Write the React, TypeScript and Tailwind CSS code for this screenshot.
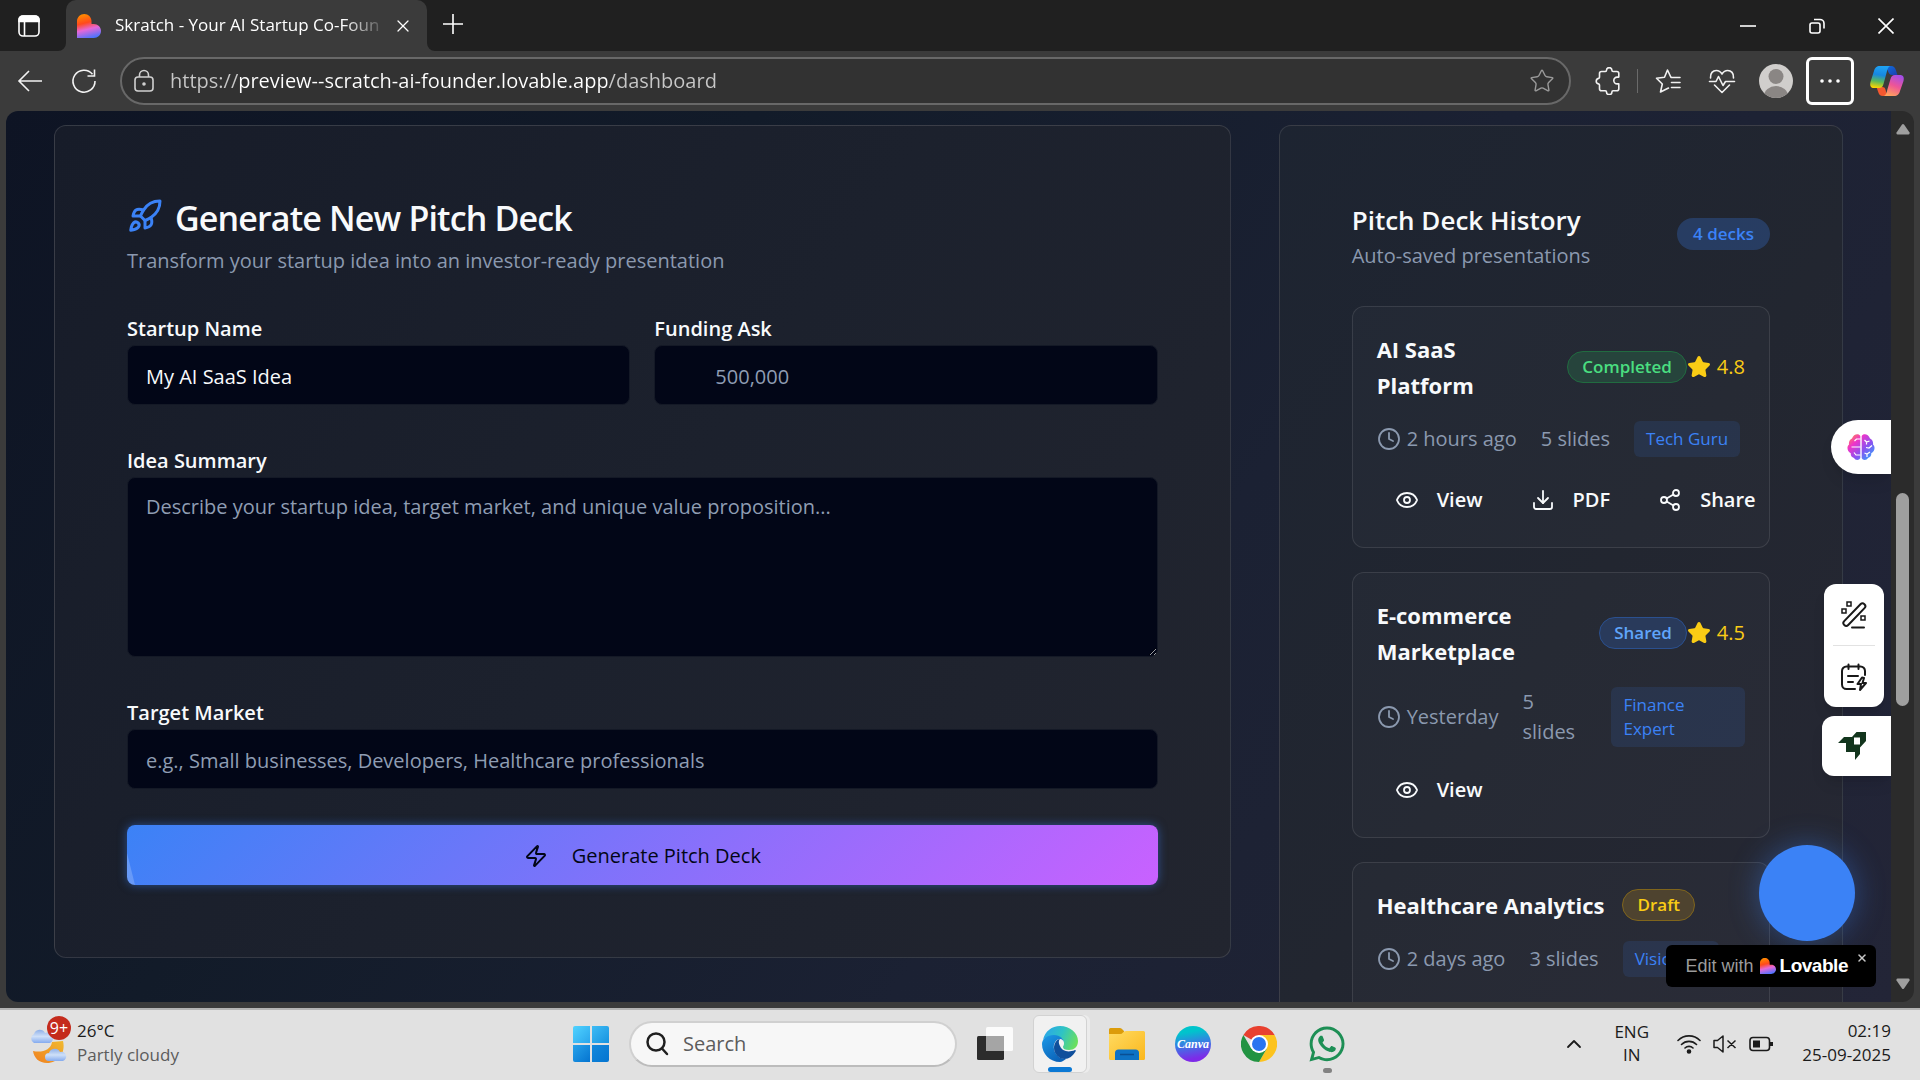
import React from 'react'
import { ChevronUp, Clock, Download, Eye, Rocket, Share2, Star, X, Zap } from 'lucide-react';
import { FaWhatsapp } from 'react-icons/fa';

type Deck = {
	title: string
	status: string
	badge: string
	rating?: string
	time: string
	slides: string
	mentor: string
	full?: boolean
}

const decks: Deck[] = [
	{ title: 'AI SaaS Platform', status: 'Completed', badge: 'bg-[#26443c] border-[#216b40] text-[#4ade80]', rating: '4.8', time: '2 hours ago', slides: '5 slides', mentor: 'Tech Guru', full: true },
	{ title: 'E-commerce Marketplace', status: 'Shared', badge: 'bg-[#293a5b] border-[#2b508f] text-[#60a5fa]', rating: '4.5', time: 'Yesterday', slides: '5 slides', mentor: 'Finance Expert' },
	{ title: 'Healthcare Analytics', status: 'Draft', badge: 'bg-[#4e432f] border-[#80651c] text-[#facc15]', time: '2 days ago', slides: '3 slides', mentor: 'Visionary' },
];

function LovableLogo({ className, id }: { className: string, id: string }) {
	return (
		<svg className={className} viewBox="0 0 24 24" preserveAspectRatio="none">
			<defs>
				<linearGradient id={id} x1="0.35" y1="0" x2="0.6" y2="1">
					<stop offset="0" stopColor="#ff8a00" />
					<stop offset="0.35" stopColor="#ff4a1c" />
					<stop offset="0.62" stopColor="#e667d8" />
					<stop offset="1" stopColor="#4b73ff" />
				</linearGradient>
			</defs>
			<path d="M7.3 0C11.3 0 14.5 3.2 14.5 7.2V10H16.8C20.8 10 24 13.1 24 17S20.8 24 16.8 24H0V7.2C0 3.2 3.3 0 7.3 0Z" fill={`url(#${id})`} />
		</svg>
	)
}

function TabStrip() {
	return (
		<div className="flex h-[51px] shrink-0 bg-[#202020] text-white">
			<button aria-label="Tab actions" className="flex w-[58px] items-center justify-center">
				<svg className="h-6 w-6" viewBox="0 0 24 24" fill="none" stroke="currentColor" strokeWidth="1.6">
					<rect x="2" y="2" width="20" height="20" rx="4" />
					<path d="M7.5 8V22" />
					<path d="M2 7.5V6a4 4 0 0 1 4-4h12a4 4 0 0 1 4 4v1.5Z" fill="currentColor" />
				</svg>
			</button>
			<svg className="h-2 w-2 self-end" viewBox="0 0 8 8"><path d="M8 0V8H0A8 8 0 0 0 8 0Z" fill="#3b3b3b" /></svg>
			<div className="flex w-[361px] items-center rounded-t-[10px] bg-[#3b3b3b] pl-[11px]">
				<LovableLogo id="tab-logo" className="h-6 w-6 shrink-0" />
				<span className="ml-3.5 w-[272px] overflow-hidden pb-0.5 text-[17px] whitespace-nowrap [mask-image:linear-gradient(90deg,#000_84%,transparent)]">Skratch - Your AI Startup Co-Foun</span>
				<button aria-label="Close tab" className="ml-1.5"><X className="h-5 w-5" strokeWidth={1.5} /></button>
			</div>
			<svg className="h-2 w-2 self-end" viewBox="0 0 8 8"><path d="M0 0V8H8A8 8 0 0 1 0 0Z" fill="#3b3b3b" /></svg>
			<button aria-label="New tab" className="flex w-9 items-center justify-center pb-1">
				<svg className="h-6 w-6" viewBox="0 0 24 24" stroke="currentColor" strokeWidth="1.6"><path d="M12 2V22M2 12H22" /></svg>
			</button>
			<div className="ml-auto flex">
				<button aria-label="Minimize" className="flex w-[69px] items-center justify-center">
					<svg className="h-4 w-4" viewBox="0 0 16 16" stroke="currentColor" strokeWidth="1.6"><path d="M0 8H16" /></svg>
				</button>
				<button aria-label="Restore" className="flex w-[69px] items-center justify-center">
					<svg className="h-4 w-4" viewBox="0 0 16 16" fill="none" stroke="currentColor" strokeWidth="1.6"><rect x="1" y="5" width="10" height="10" rx="2" /><path d="M5 1.5h6a4 4 0 0 1 4 4v5" /></svg>
				</button>
				<button aria-label="Close" className="flex w-[69px] items-center justify-center">
					<svg className="h-4 w-4" viewBox="0 0 16 16" stroke="currentColor" strokeWidth="1.6"><path d="M0.5 0.5 15.5 15.5M15.5 0.5 0.5 15.5" /></svg>
				</button>
			</div>
		</div>
	)
}

function Copilot() {
	return (
		<svg className="h-9 w-9" viewBox="0 0 36 36">
			<defs>
				<linearGradient id="cp-a" x1="0.5" y1="0" x2="0.35" y2="1">
					<stop offset="0" stopColor="#1fa3f4" />
					<stop offset="0.4" stopColor="#1787e0" />
					<stop offset="0.7" stopColor="#5bb85c" />
					<stop offset="1" stopColor="#ffd500" />
				</linearGradient>
				<linearGradient id="cp-b" x1="0.7" y1="0" x2="0.3" y2="1">
					<stop offset="0" stopColor="#a44ee8" />
					<stop offset="0.5" stopColor="#ee5597" />
					<stop offset="1" stopColor="#ffa35c" />
				</linearGradient>
				<linearGradient id="cp-c" x1="0" y1="0" x2="1" y2="1">
					<stop offset="0" stopColor="#0f6fe0" />
					<stop offset="1" stopColor="#1b3fae" />
				</linearGradient>
			</defs>
			<path d="M16 3h6c3 0 4 1.500 5 4.500l1.500 4.500h-5c-3 0-4-2-5-5Z" fill="url(#cp-c)" />
			<path d="M20 33h-6c-3 0-4-1.500-5-4.500L7.500 24h6c3 0 3 3 4 6Z" fill="#f4582f" />
			<path d="M11 3h10c-2 1-2.500 3-3.500 7l-3 11c-1 3-2 4-4.500 4H5c-3 0-4.500-2-3.500-6L5 8c1-3.500 2.500-5 6-5Z" fill="url(#cp-a)" />
			<path d="M25 33H15c2-1 2.500-3 3.500-7l3-10c1-3 2-4 4.500-4h5c3 0 4.500 2 3.500 6L31 28c-1 3.500-2.500 5-6 5Z" fill="url(#cp-b)" />
		</svg>
	)
}

function Toolbar() {
	return (
		<div className="flex h-[60px] shrink-0 items-center bg-[#3b3b3b] pr-[15px] text-[#f2f2f2]">
			<button aria-label="Back" className="ml-4 flex w-7 justify-center">
				<svg className="h-6 w-7" viewBox="0 0 28 24" fill="none" stroke="currentColor" strokeWidth="1.6"><path d="M26 12H3M13 2 3 12l10 10" /></svg>
			</button>
			<button aria-label="Refresh" className="ml-[26px] flex w-7 justify-center">
				<svg className="h-7 w-7" viewBox="0 0 28 28" fill="none" stroke="currentColor" strokeWidth="1.6"><path d="M25 14A11 11 0 1 1 22.500 7.200M24.500 2.500V9h-7" /></svg>
			</button>
			<div className="ml-[22px] flex h-12 flex-1 items-center rounded-full border-2 border-[#686868] bg-[#323232] pr-3.5 pl-3">
				<svg className="h-6 w-5 text-[#d0d0d0]" viewBox="0 0 20 24" fill="none" stroke="currentColor" strokeWidth="1.6">
					<rect x="1" y="8" width="18" height="14" rx="3" />
					<path d="M5.500 8V6a4.500 4.500 0 0 1 9 0v2" />
					<circle cx="10" cy="15" r="1" fill="currentColor" />
				</svg>
				<input aria-label="Address" defaultValue="https://preview--scratch-ai-founder.lovable.app/dashboard" className="ml-4 flex-1 bg-[linear-gradient(90deg,#c8c8c8_68px,#fff_68px,#fff_437px,#c8c8c8_437px)] bg-clip-text text-[20px] text-transparent outline-none" />
				<button aria-label="Add to favorites"><Star className="h-[26px] w-[26px] text-[#9a9a9a]" strokeWidth={1.3} /></button>
			</div>
			<button aria-label="Extensions" className="ml-6">
				<svg className="h-7 w-7" viewBox="0 0 28 28" fill="none" stroke="currentColor" strokeWidth="1.6" strokeLinejoin="round">
					<path d="M6.500 4.500h3.800a1.200 1.200 0 0 0 1.200-1.200 2.700 2.700 0 0 1 5.400 0 1.200 1.200 0 0 0 1.200 1.200h3.700a2 2 0 0 1 2 2v3.600h-1.600a3.400 3.400 0 0 0 0 6.800h1.600v4.800a2 2 0 0 1-2 2h-3.700a1.200 1.200 0 0 0-1.200 1.200 2.700 2.700 0 0 1-5.400 0 1.200 1.200 0 0 0-1.200-1.200H6.500a2 2 0 0 1-2-2v-3.600a1.200 1.200 0 0 0-1-1.200 2.800 2.800 0 0 1 0-5.500 1.200 1.200 0 0 0 1-1.200V6.500a2 2 0 0 1 2-2Z" />
				</svg>
			</button>
			<div className="ml-3.5 h-6 w-px bg-[#6a6a6a]" />
			<button aria-label="Favorites" className="ml-4">
				<svg className="h-7 w-7" viewBox="0 0 28 28" fill="none" stroke="currentColor" strokeWidth="1.6" strokeLinejoin="round" strokeLinecap="round">
					<path d="M17 10.500 13.500 3 10.500 10.300 2.500 11.200l5.800 5.800L6.500 25l8-4M17.500 10.500H26M17.500 15.500H26M17.500 20.500H26" />
				</svg>
			</button>
			<button aria-label="Browser essentials" className="ml-[26px]">
				<svg className="h-7 w-7" viewBox="0 0 28 28" fill="none" stroke="currentColor" strokeWidth="1.6" strokeLinejoin="round" strokeLinecap="round">
					<path d="M2.500 11C2 6 5 3.500 8.300 3.500c2.500 0 4.500 1.500 5.700 3.500 1.200-2 3.200-3.500 5.700-3.500C23 3.500 26 6 25.500 11M6.500 18 14 25.500 21.500 18M1.500 14.500H8l2.500-5 4.500 9 2.500-4h9" />
				</svg>
			</button>
			<button aria-label="Profile" className="ml-[23px]">
				<svg className="h-[34px] w-[34px]" viewBox="0 0 34 34">
					<clipPath id="avatar"><circle cx="17" cy="17" r="17" /></clipPath>
					<g clipPath="url(#avatar)">
						<rect width="34" height="34" fill="#d0cecc" />
						<circle cx="17" cy="12.500" r="7.500" fill="#8a8684" />
						<ellipse cx="17" cy="32" rx="12" ry="10" fill="#8a8684" />
					</g>
				</svg>
			</button>
			<button aria-label="Settings and more" className="ml-[13px] flex h-12 w-12 items-center justify-center rounded-md border-[3px] border-white">
				<svg className="h-1 w-5" viewBox="0 0 20 4" fill="#fff"><circle cx="2" cy="2" r="1.8" /><circle cx="10" cy="2" r="1.8" /><circle cx="18" cy="2" r="1.8" /></svg>
			</button>
			<button aria-label="Copilot" className="ml-[15px]"><Copilot /></button>
		</div>
	)
}

function GenerateForm() {
	const label = "pt-1 text-[20px] leading-8 font-semibold text-[#f8fafc]";
	const field = "w-full rounded-lg border border-[#141926] bg-[#020617] px-[18px] text-[20px] text-[#f8fafc] outline-none placeholder:text-[#8f9db3]";
	return (
		<section className="col-span-2 self-start rounded-xl border border-white/12 bg-[linear-gradient(125deg,#171c29,#1c212d_50%,#22252f)] p-[72px]">
			<h1 className="flex h-10 items-center gap-3 text-[34px] font-semibold tracking-tight text-[#f8fafc]">
				<Rocket className="mb-1 h-9 w-9 text-[#3b82f6]" /> Generate New Pitch Deck
			</h1>
			<p className="pt-2 text-[20px] leading-[30px] text-[#8b99af]">Transform your startup idea into an investor-ready presentation</p>
			<form className="mt-[33px] flex flex-col gap-9">
				<div className="grid grid-cols-2 gap-6">
					<div className="flex flex-col">
						<label className={label} htmlFor="name">Startup Name</label>
						<input id="name" defaultValue="My AI SaaS Idea" className={`${field} h-[60px] pt-0.5`} />
					</div>
					<div className="flex flex-col">
						<label className={label} htmlFor="ask">Funding Ask</label>
						<input id="ask" placeholder="500,000" className={`${field} h-[60px] pt-0.5 indent-[42px]`} />
					</div>
				</div>
				<div className="flex flex-col">
					<label className={label} htmlFor="summary">Idea Summary</label>
					<textarea id="summary" placeholder="Describe your startup idea, target market, and unique value proposition..." className={`${field} h-[180px] resize-y py-3.5 leading-[30px]`} />
				</div>
				<div className="flex flex-col">
					<label className={label} htmlFor="market">Target Market</label>
					<input id="market" placeholder="e.g., Small businesses, Developers, Healthcare professionals" className={`${field} h-[60px] pt-0.5`} />
				</div>
				<button type="button" className="relative flex h-[60px] items-center justify-center gap-6 overflow-hidden rounded-lg bg-[linear-gradient(135deg,#3b82f6,#c961ff)] pt-0.5 text-[20px] font-medium text-[#020617] shadow-[0_0_10px_#3b82f680]">
					<svg className="absolute bottom-0 left-0 h-8 w-2" viewBox="0 0 8 32"><path d="M0 0 8 32H0Z" fill="#fff" fillOpacity="0.2" /></svg>
					<Zap className="h-6 w-6" /> Generate Pitch Deck
				</button>
			</form>
		</section>
	)
}

function DeckCard({ deck }: { deck: Deck }) {
	const action = "flex h-12 items-center gap-[18px] px-[18px] pt-0.5";
	return (
		<article className="flex flex-col gap-[18px] rounded-xl border border-white/10 bg-white/2 p-6">
			<div className="flex items-center justify-between">
				<div className="flex items-center gap-[18px]">
					<h3 className="text-[22px] leading-9 font-bold text-[#f8fafc]">{deck.title}</h3>
					<span className={`rounded-full border px-3.5 text-[17px] leading-[30px] font-semibold ${deck.badge}`}>{deck.status}</span>
				</div>
				{deck.rating && (
					<span className="flex items-center gap-1.5 text-[20px] leading-[30px] text-[#facc15]">
						<Star className="h-6 w-6 fill-current" />{deck.rating}
					</span>
				)}
			</div>
			<div className="flex items-center gap-6 text-[20px] leading-[30px] text-[#8b99af]">
				<span className="flex items-center gap-1.5 whitespace-nowrap"><Clock className="h-6 w-6" strokeWidth={1.8} />{deck.time}</span>
				<span>{deck.slides}</span>
				<span className="rounded-md bg-[#3b82f6]/12 px-3 py-1.5 text-[17px] leading-6 text-[#3b82f6]">{deck.mentor}</span>
			</div>
			<div className="flex gap-3 text-[20px] font-semibold text-[#f8fafc]">
				<button className={action}><Eye className="h-6 w-6" strokeWidth={1.8} />View</button>
				{deck.full && <button className={action}><Download className="h-6 w-6" strokeWidth={1.8} />PDF</button>}
				{deck.full && <button className={action}><Share2 className="h-6 w-6" strokeWidth={1.8} />Share</button>}
			</div>
		</article>
	)
}

function History() {
	return (
		<section className="rounded-xl border border-white/10 bg-[linear-gradient(125deg,#1d2431,#222630_50%,#272834)] p-[72px]">
			<div className="flex h-[72px] items-center justify-between">
				<div className="pt-2">
					<h2 className="text-[26px] leading-9 font-semibold text-[#f8fafc]">Pitch Deck History</h2>
					<p className="text-[20px] leading-9 text-[#8b99af]">Auto-saved presentations</p>
				</div>
				<span className="rounded-full bg-[#3b82f6]/25 px-4 text-[17px] leading-8 font-semibold text-[#3b82f6]">4 decks</span>
			</div>
			<div className="mt-9 flex flex-col gap-6">
				{decks.map((deck) => <DeckCard key={deck.title} deck={deck} />)}
			</div>
		</section>
	)
}

function Brain() {
	return (
		<svg className="h-7 w-7" viewBox="0 0 28 28">
			<defs>
				<linearGradient id="brain" x1="0" y1="0" x2="1" y2="1">
					<stop offset="0" stopColor="#ff9d2f" />
					<stop offset="0.3" stopColor="#f034c8" />
					<stop offset="0.6" stopColor="#8a52f0" />
					<stop offset="1" stopColor="#22b4ff" />
				</linearGradient>
			</defs>
			<path d="M13.300 3v22c-1 2.500-5 2.500-6.300 0-2.500-.5-3.600-2.500-3.200-4.800C0 18.500-.5 13.500 2 11.500 1.500 8.500 3 6.200 5 5.500 6.500.5 12 0 13.300 3ZM14.700 3v22c1 2.500 5 2.500 6.300 0 2.500-.5 3.600-2.500 3.200-4.800 3.800-1.700 4.300-6.700 1.800-8.700.5-3-1-5.300-3-6C21.500.5 16 0 14.700 3Z" fill="url(#brain)" />
			<g fill="none" stroke="#fff" strokeWidth="1.200">
				<path d="M13.500 6H9.500L7.500 8M4.500 14h9M7 19.500 9 22h4.500M17.500 7l2 2 3-1M19.500 9v2.500M19 14.500l3 .5 3-2.500M17.500 20l2.500 1 3-2M20 21v3" />
			</g>
		</svg>
	)
}

function SideTools() {
	return (
		<>
			<button aria-label="Assistant" className="absolute top-[309px] right-0 flex h-[54px] w-[60px] items-center rounded-l-full bg-white pl-4 shadow-lg"><Brain /></button>
			<div className="absolute top-[473px] right-[7px] flex h-[123px] w-[60px] flex-col items-center rounded-xl bg-white text-[#191919] shadow-lg">
				<button aria-label="Rewrite" className="flex flex-1 items-center">
					<svg className="h-7 w-7" viewBox="0 0 28 28" fill="none" stroke="currentColor" strokeWidth="2" strokeLinecap="round">
						<rect x="-2.800" y="-15" width="5.600" height="29" rx="2.800" transform="translate(14 14) rotate(44)" />
						<path d="M12 26.500H24" />
						<path d="M7 1h4v4H7zM2 8h4v4H2zM21 15h4v4h-4z" strokeWidth="1.500" />
					</svg>
				</button>
				<div className="h-px w-[42px] bg-[#e2e2e2]" />
				<button aria-label="Quick notes" className="flex flex-1 items-center">
					<svg className="h-7 w-7" viewBox="0 0 28 28" fill="none" stroke="currentColor" strokeWidth="2" strokeLinecap="round" strokeLinejoin="round">
						<path d="M25 12V8a4.500 4.500 0 0 0-4.500-4.500H6.500A4.500 4.500 0 0 0 2 8v13.500A4.500 4.500 0 0 0 6.500 26H15M8.500 1.500V6M18.500 1.500V6M8 13h10M8 19h5M22 14.500 17.500 21H21l-1 6 6-7h-3.500l1.500-5Z" />
					</svg>
				</button>
			</div>
			<button aria-label="Launch" className="absolute top-[605px] right-0 flex h-[60px] w-[69px] items-center rounded-l-xl bg-white pl-4 shadow-lg">
				<svg className="h-7 w-7" viewBox="0 0 28 28"><path d="M18.500 0H28V9l-6 6.500V22l-5 6v-8H8v-9H0l6-6h8ZM16 5.500v7h6v-7Z" fill="#12351d" fillRule="evenodd" /></svg>
			</button>
			<button aria-label="Chat" className="absolute right-9 bottom-[61px] h-24 w-24 rounded-full bg-[#3b82f6] shadow-[0_0_30px_#3b82f666]" />
			<div className="absolute right-[15px] bottom-[15px] flex h-[42px] items-center rounded-md bg-black pr-2 pl-[19px] font-['Liberation_Sans'] text-[18px]">
				<a href="#" className="flex items-center text-[#9b9b9b]">
					Edit with <LovableLogo id="badge-logo" className="mr-1 ml-1.5 h-4 w-4" /> <b className="text-[19px] tracking-tight text-white">Lovable</b>
				</a>
				<button aria-label="Dismiss" className="mb-4 ml-2 text-[#c8c8c8]"><X className="h-3 w-3" strokeWidth={3} /></button>
			</div>
		</>
	)
}

function Scrollbar() {
	return (
		<div className="flex w-[23px] shrink-0 flex-col items-center bg-[#2b2b2b] py-3">
			<svg className="h-3 w-3.5" viewBox="0 0 14 12"><path d="M6 1.500Q7 .5 8 1.500L13.500 9.500Q14 11.500 12.500 11.500H1.500Q0 11.500.5 9.500Z" fill="#9f9f9f" /></svg>
			<div className="flex w-full flex-1 flex-col items-center">
				<div className="grow-[358]" />
				<div className="h-[213px] w-[13px] rounded-full bg-[#9f9f9f]" />
				<div className="grow-[272]" />
			</div>
			<svg className="h-3 w-3.5" viewBox="0 0 14 12"><path d="M6 10.500Q7 11.500 8 10.500L13.500 2.500Q14 .5 12.500 .5H1.500Q0 .5.5 2.500Z" fill="#9f9f9f" /></svg>
		</div>
	)
}

function Weather() {
	return (
		<button className="flex items-center gap-2 text-left">
			<span className="relative">
				<svg className="h-10 w-10" viewBox="0 0 40 40">
					<defs>
						<linearGradient id="cloud" x1="0" y1="0" x2="0" y2="1"><stop offset="0" stopColor="#8fb0e8" /><stop offset="0.5" stopColor="#cfe0f8" /><stop offset="1" stopColor="#85abef" /></linearGradient>
						<linearGradient id="moon" x1="1" y1="0" x2="0" y2="1"><stop offset="0" stopColor="#f0b92f" /><stop offset="1" stopColor="#f08020" /></linearGradient>
					</defs>
					<path d="M4 27c9 2 18-1 19-9l11-1c3 12-5 22-16 22C10 39 5 34 4 27Z" fill="url(#moon)" />
					<path d="M5 19a5 5 0 0 1 0-9 6 6 0 0 1 11-1 5 5 0 0 1 5 10Z" fill="url(#cloud)" />
					<path d="M20 37a4 4 0 0 1 0-8 6 6 0 0 1 11-1 4.500 4.500 0 0 1 3 9Z" fill="url(#cloud)" />
				</svg>
				<span className="absolute -top-2 left-[18px] h-6 w-6 rounded-full bg-[#c42b1c] text-center text-[16px] leading-6 text-white">9+</span>
			</span>
			<span className="pb-0.5 text-[17px] leading-6 text-[#1b1b1b]">26°C<br /><span className="text-[#5c5c5c]">Partly cloudy</span></span>
		</button>
	)
}

function EdgeIcon() {
	return (
		<svg className="h-9 w-9" viewBox="0 0 36 36">
			<defs>
				<linearGradient id="edge-a" x1="0" y1="0.3" x2="1" y2="0.6"><stop offset="0" stopColor="#2aa6ea" /><stop offset="0.5" stopColor="#2fc3c4" /><stop offset="1" stopColor="#6be05b" /></linearGradient>
				<linearGradient id="edge-b" x1="0" y1="0" x2="0.6" y2="1"><stop offset="0" stopColor="#1c9ae8" /><stop offset="1" stopColor="#0b62b8" /></linearGradient>
			</defs>
			<path d="M1 14C3 5 10 0 18 0c10 0 18 7 18 15 0 6-4 9-9 9-4 0-6-1-6-3 0-1 1-1 1-4 0-4-4-7-9-7-6 0-10 2-12 4Z" fill="url(#edge-a)" />
			<path d="M0 18c0-5 5-9 12-9 6 0 10 4 10 8 0-2-2-4-4-4-4 0-7 5-6 10 1 6 6 10 12 10-2 1-4 3-6 3C8 36 0 28 0 18Z" fill="url(#edge-b)" />
			<path d="M12 22c0-5 3-9 6-9-2 2-1 5 0 7 2 5 8 7 15 4 1 0 1 1 .5 1.500C31 30 27 33 22.500 33 17 33 12 28 12 22Z" fill="#0f4f9c" />
		</svg>
	)
}

function ChromeIcon() {
	return (
		<svg className="h-9 w-9" viewBox="0 0 36 36">
			<path d="M18 18 2.400 9A18 18 0 0 1 33.600 9Z" fill="#e8402f" />
			<path d="M18 9H33.600A18 18 0 0 1 18 36L25.800 22.500Z" fill="#fcc31e" />
			<path d="M2.400 9 10.200 22.500 18 27l7.800-4.500L18 36A18 18 0 0 1 2.400 9Z" fill="#229342" />
			<circle cx="18" cy="18" r="9" fill="#fff" />
			<circle cx="18" cy="18" r="7" fill="#2a74f0" />
		</svg>
	)
}

function Taskbar() {
	return (
		<footer className="flex h-[72px] shrink-0 items-center border-t-2 border-[#b4b4b4] bg-[#e1e1e1] pr-[29px] pb-0.5 pl-[29px] text-[#1b1b1b]">
			<div className="flex-1"><Weather /></div>
			<div className="flex items-center">
				<button aria-label="Start" className="grid h-9 w-9 grid-cols-2 gap-0.5">
					<span className="rounded-tl-xs bg-linear-to-br from-[#50d3ff] to-[#2aa6ec]" />
					<span className="rounded-tr-xs bg-linear-to-br from-[#3dbcf5] to-[#1593e0]" />
					<span className="rounded-bl-xs bg-linear-to-br from-[#25a2ea] to-[#0574d0]" />
					<span className="rounded-br-xs bg-linear-to-br from-[#1289dc] to-[#0574d0]" />
				</button>
				<label className="ml-5 flex h-[46px] w-[328px] items-center rounded-full border-2 border-[#d0d0d0] border-b-[#bcbcbc] bg-[#f7f7f7] pl-3.5">
					<svg className="h-6 w-6" viewBox="0 0 24 24" fill="none" stroke="#1f1f1f" strokeWidth="2.500" strokeLinecap="round"><circle cx="11" cy="10" r="8.500" /><path d="M17 16.500 22 22" /></svg>
					<input aria-label="Search" placeholder="Search" className="ml-3.5 w-60 bg-transparent text-[20px] outline-none placeholder:text-[#5c5c5c]" />
				</label>
				<button aria-label="Task view" className="ml-5">
					<svg className="h-9 w-9" viewBox="0 0 36 36">
						<rect x="0" y="10" width="27" height="24" rx="1.500" fill="#2c2c2c" />
						<rect x="9" y="1" width="27" height="24" rx="1.500" fill="#fff" fillOpacity="0.85" />
						<rect x="9" y="10" width="18" height="15" fill="#a5a5a5" />
					</svg>
				</button>
				<button aria-label="Edge" className="relative ml-5 flex h-[58px] w-[54px] items-center justify-center rounded-md border border-[#d2d2d2] bg-[#f1f1f1] shadow-[3px_0_0_#ececec]">
					<EdgeIcon />
					<span className="absolute bottom-0 h-[5px] w-6 rounded-full bg-[#0a78d4]" />
				</button>
				<button aria-label="File Explorer" className="ml-[22px]">
					<svg className="h-9 w-9" viewBox="0 0 36 36">
						<defs><linearGradient id="folder" x1="0" y1="0" x2="1" y2="1"><stop offset="0" stopColor="#ffdb62" /><stop offset="1" stopColor="#fbb71c" /></linearGradient></defs>
						<path d="M0 3.500Q0 2 1.500 2H11q1.500 0 2.500 1.500L15 5v5H0Z" fill="#dc9c0a" />
						<path d="M0 8h11q2 0 3-1.500T17 5h17.500Q36 5 36 6.500v26Q36 34 34.500 34h-33Q0 34 0 32.500Z" fill="url(#folder)" />
						<path d="M6 34V27q0-3.500 3.500-3.500h17Q30 23.500 30 27v7Z" fill="#0e72c4" />
						<path d="M11 28.500H25" stroke="#0a4f93" strokeWidth="1.500" />
					</svg>
				</button>
				<button aria-label="Canva" className="ml-[30px] h-9 w-9 overflow-hidden rounded-full bg-[linear-gradient(170deg,#00c4cc_20%,#3a7ae4_50%,#7d2ae8_85%)]">
					<span className="block text-center font-['Liberation_Serif'] text-[12px] font-bold text-white italic">Canva</span>
				</button>
				<button aria-label="Chrome" className="ml-[30px]"><ChromeIcon /></button>
				<button aria-label="WhatsApp" className="relative ml-[30px] flex h-[58px] items-center">
					<FaWhatsapp className="h-10 w-10 text-[#1d8f55]" />
					<span className="absolute bottom-0 left-4 h-[5px] w-[9px] rounded-full bg-[#828282]" />
				</button>
			</div>
			<div className="flex flex-1 items-center justify-end text-[17px]">
				<button aria-label="Hidden icons"><ChevronUp className="h-6 w-6" strokeWidth={1.8} /></button>
				<span className="ml-7 pb-0.5 text-center leading-[23px]">ENG<br />IN</span>
				<svg className="ml-7 h-6 w-6" viewBox="0 0 24 24" fill="none" stroke="currentColor" strokeWidth="1.600" strokeLinecap="round">
					<path d="M1 8.500a15.500 15.500 0 0 1 22 0M4.500 12.500a10.500 10.500 0 0 1 15 0M8 16a5.700 5.700 0 0 1 8 0" /><circle cx="12" cy="19.500" r="1.500" fill="currentColor" />
				</svg>
				<svg className="ml-3 h-6 w-6" viewBox="0 0 24 24" fill="none" stroke="currentColor" strokeWidth="1.500" strokeLinejoin="round">
					<path d="M1 8.500h3.500L10 4v16l-5.500-4.500H1ZM14.500 8.500l8 7.500M22.500 8.500l-8 7.500" />
				</svg>
				<svg className="ml-3 h-6 w-6" viewBox="0 0 24 24" fill="none" stroke="currentColor" strokeWidth="1.600">
					<rect x="1" y="5.500" width="19.500" height="13" rx="3" /><path d="M22.500 10v4" strokeWidth="3" /><rect x="4" y="8.500" width="7" height="7" fill="currentColor" stroke="none" />
				</svg>
				<time className="w-[118px] pb-0.5 text-right leading-6">02:19<br />25-09-2025</time>
			</div>
		</footer>
	)
}

export default function App() {
	return (
		<div className="flex h-screen min-h-[600px] flex-col overflow-hidden bg-[#3b3b3b] font-['Open_Sans',sans-serif]">
			<TabStrip />
			<Toolbar />
			<div className="mx-1.5 mb-1.5 flex min-h-0 flex-1 overflow-hidden rounded-xl">
				<main className="relative min-w-0 flex-1 overflow-hidden bg-[linear-gradient(125deg,#0e1424,#121b29_30%,#1b2133_60%,#232537)]">
					<div className="grid grid-cols-3 gap-12 px-12 pt-3.5">
						<GenerateForm />
						<History />
					</div>
					<SideTools />
				</main>
				<Scrollbar />
			</div>
			<Taskbar />
		</div>
	)
}
